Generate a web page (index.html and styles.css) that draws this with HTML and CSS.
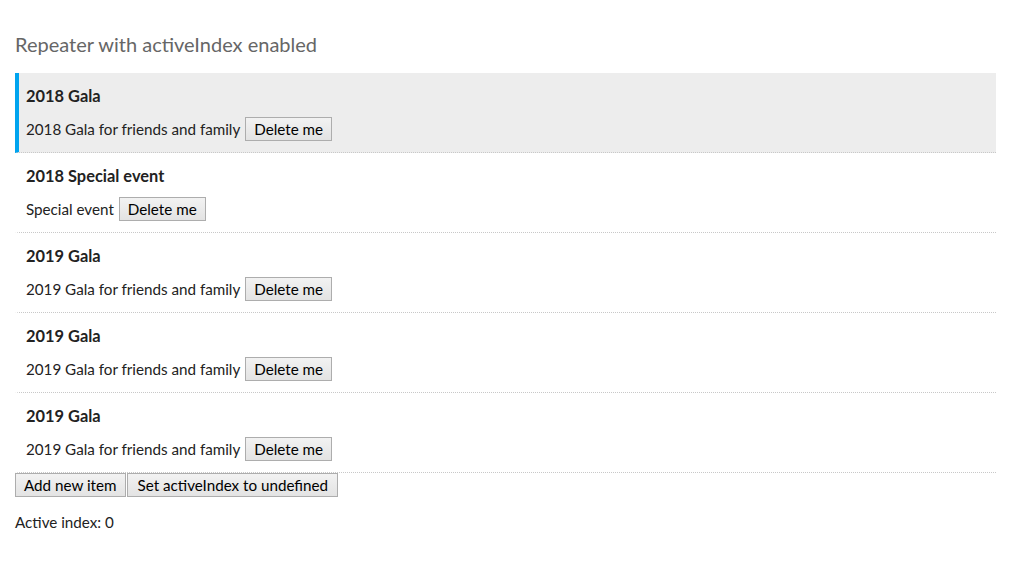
FILE: index.html
```html
<!DOCTYPE html>
<html>
<head>
<meta charset="utf-8">
<link rel="stylesheet" href="styles.css">
</head>
<body>
<div class="page">
  <h2 class="title">Repeater with activeIndex enabled</h2>
  <div class="repeater">
    <div class="item active">
      <div class="item-title">2018 Gala</div>
      <div class="item-row"><span>2018 Gala for friends and family</span><button class="btn">Delete me</button></div>
    </div>
    <div class="item">
      <div class="item-title">2018 Special event</div>
      <div class="item-row"><span>Special event</span><button class="btn">Delete me</button></div>
    </div>
    <div class="item">
      <div class="item-title">2019 Gala</div>
      <div class="item-row"><span>2019 Gala for friends and family</span><button class="btn">Delete me</button></div>
    </div>
    <div class="item">
      <div class="item-title">2019 Gala</div>
      <div class="item-row"><span>2019 Gala for friends and family</span><button class="btn">Delete me</button></div>
    </div>
    <div class="item">
      <div class="item-title">2019 Gala</div>
      <div class="item-row"><span>2019 Gala for friends and family</span><button class="btn">Delete me</button></div>
    </div>
  </div>
  <div class="actions">
    <button class="btn">Add new item</button><button class="btn btn-wide">Set activeIndex to undefined</button>
  </div>
  <p class="status">Active index: 0</p>
</div>
</body>
</html>
```
FILE: styles.css
```css
html, body {
  margin: 0;
  padding: 0;
  background: #fff;
}
body {
  font-family: Lato, "Open Sans", sans-serif;
  font-size: 15.2px;
  color: #222;
}
.page {
  padding: 31px 15px 0 15px;
}
.title {
  margin: 0 0 16px 0;
  font-size: 20px;
  font-weight: normal;
  color: #666;
  line-height: 26px;
}
.repeater {
  display: flex;
  flex-direction: column;
}
.item {
  border-left: 4px solid transparent;
  border-bottom: 1px dotted #c8c8c8;
  padding: 11px 7px 11px 7px;
  display: flex;
  flex-direction: column;
  gap: 10px;
}
.item.active {
  background: #ededed;
  border-left-color: #00a4ef;
}
.item-title {
  font-weight: bold;
  font-size: 16.4px;
  line-height: 23px;
}
.item-row {
  display: flex;
  align-items: center;
  gap: 5px;
  line-height: 24px;
}
.btn {
  font-family: inherit;
  font-size: 15.2px;
  color: #000;
  height: 24px;
  padding: 0 8px;
  margin: 0;
  border: 1px solid #adadad;
  border-radius: 0;
  background: linear-gradient(#f2f2f2, #e3e3e3);
  line-height: 20px;
}
.btn-wide {
  padding: 0 9px 0 10px;
}
.actions {
  display: flex;
  gap: 1px;
}
.status {
  margin: 14px 0 0 0;
  line-height: 22px;
}
```
